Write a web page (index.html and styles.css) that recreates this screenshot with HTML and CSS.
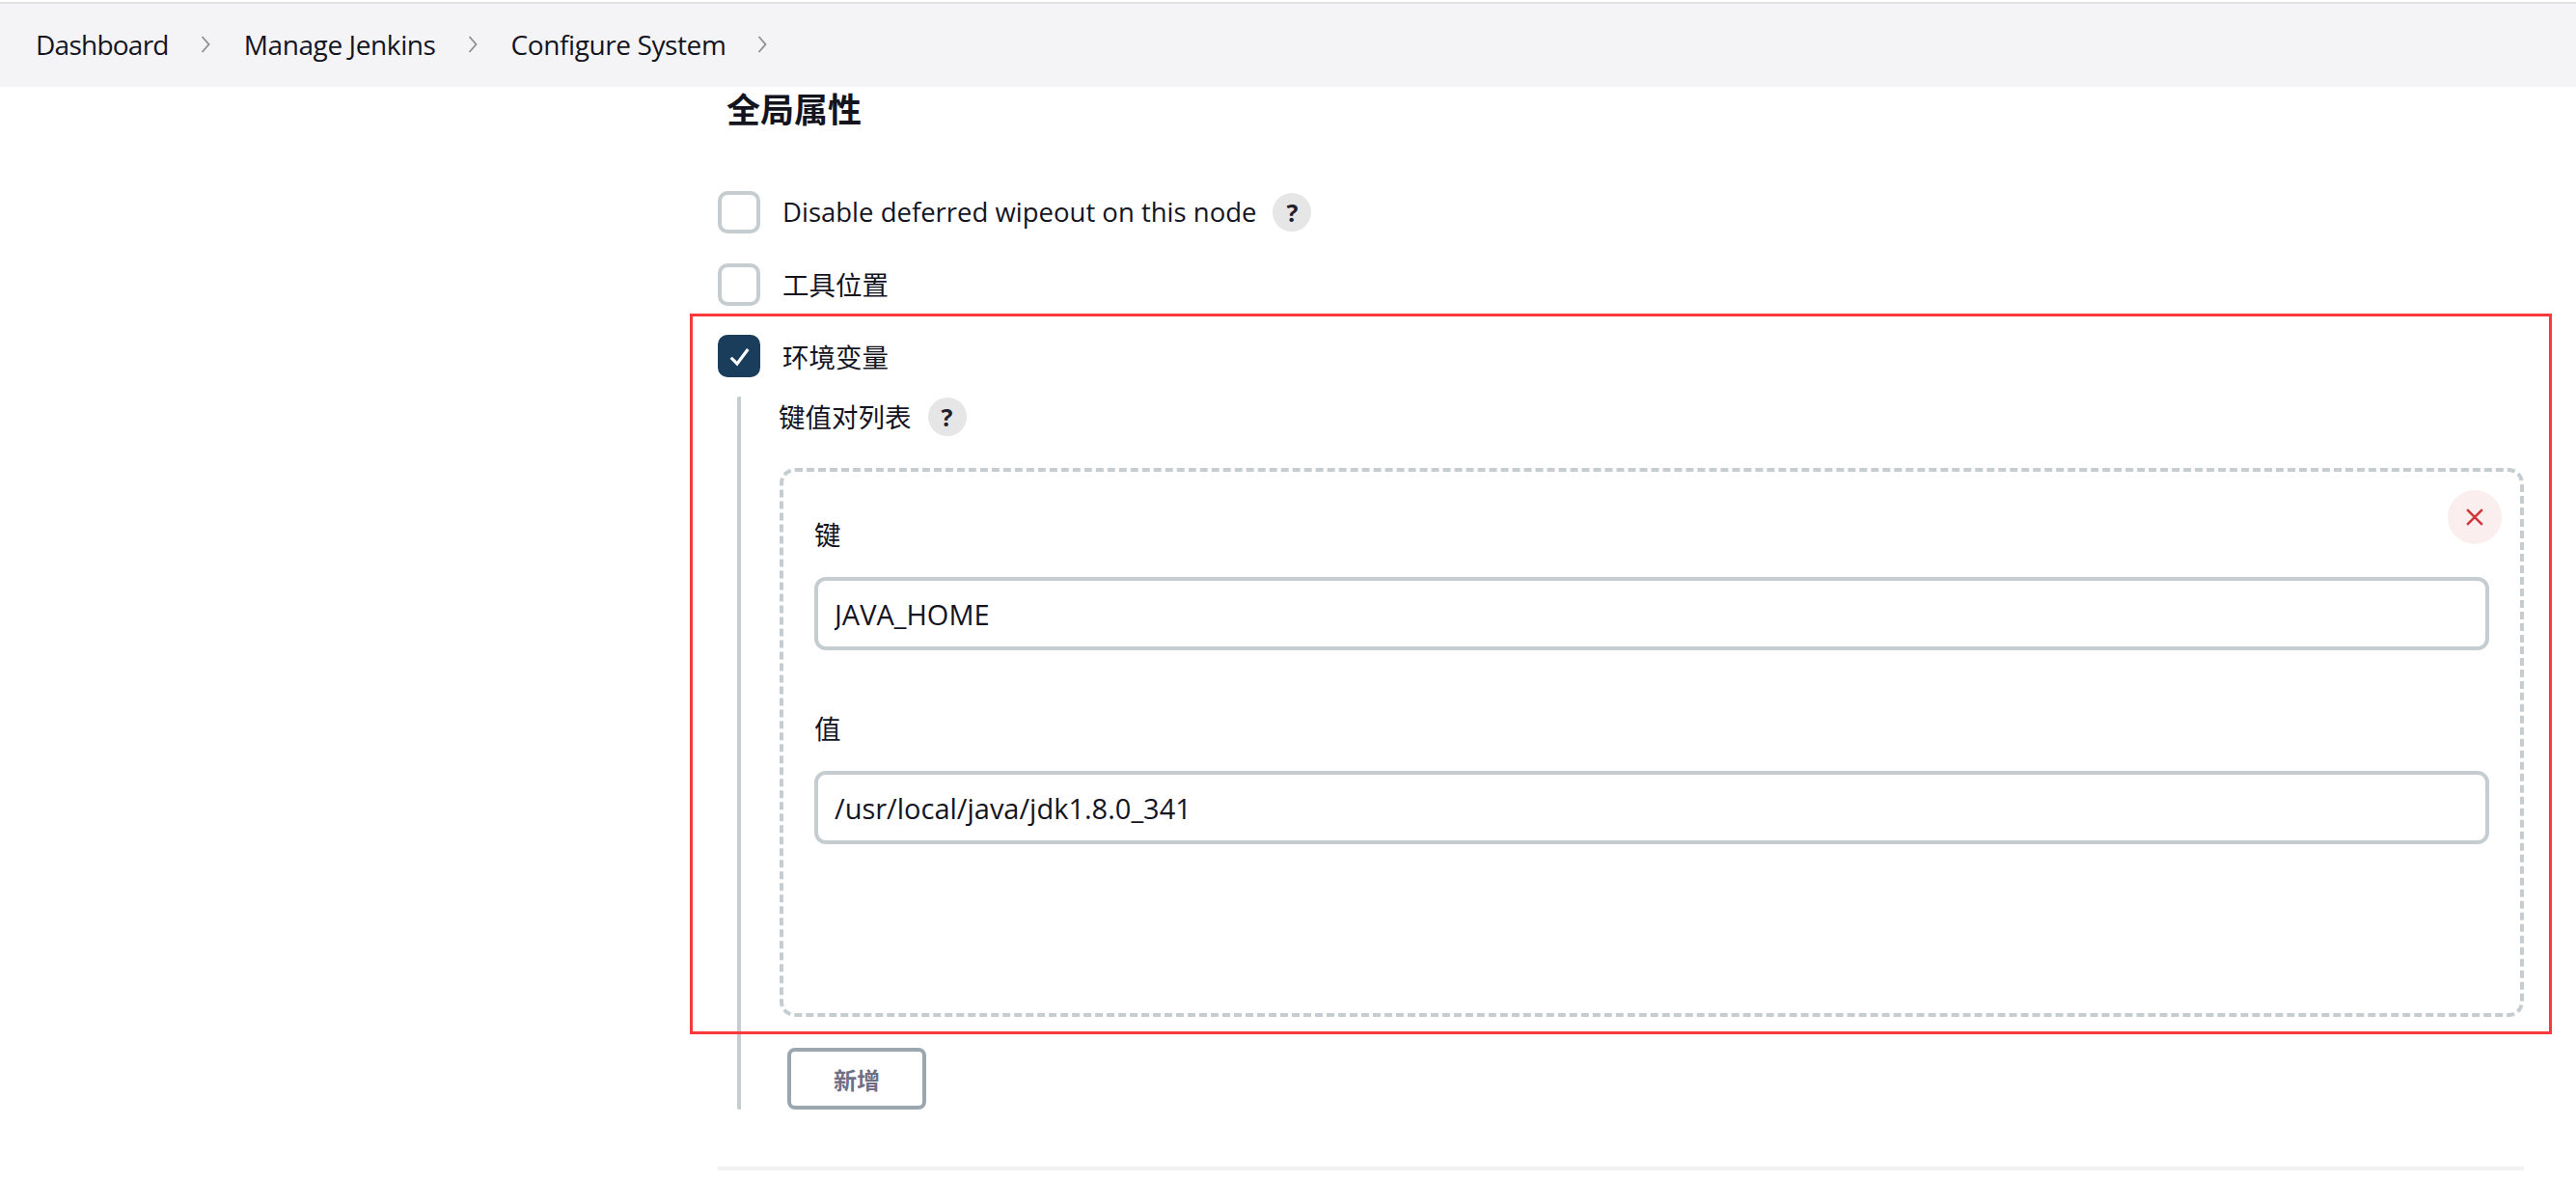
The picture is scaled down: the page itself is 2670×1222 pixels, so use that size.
FILE: index.html
```html
<!DOCTYPE html>
<html lang="zh">
<head>
<meta charset="utf-8">
<title>Configure System</title>
<link rel="stylesheet" href="styles.css">
</head>
<body>
<div class="page">
  <nav class="crumbs">
    <a class="crumb">Dashboard</a>
    <svg class="chev" viewBox="0 0 10 18"><path d="M1.5 1 L8.5 9 L1.5 17"/></svg>
    <a class="crumb">Manage Jenkins</a>
    <svg class="chev" viewBox="0 0 10 18"><path d="M1.5 1 L8.5 9 L1.5 17"/></svg>
    <a class="crumb">Configure System</a>
    <svg class="chev" viewBox="0 0 10 18"><path d="M1.5 1 L8.5 9 L1.5 17"/></svg>
  </nav>
  <main class="main">
    <h2 class="title">全局属性</h2>
    <div class="rows">
      <div class="row">
        <span class="box"></span>
        <span class="row-label">Disable deferred wipeout on this node</span>
        <span class="help">?</span>
      </div>
      <div class="row">
        <span class="box"></span>
        <span class="row-label row-label-cjk">工具位置</span>
      </div>
      <div class="row">
        <span class="box box-on">
          <svg class="tick" viewBox="0 0 20 20"><path d="M3 11 L8 16 L17 4"/></svg>
        </span>
        <span class="row-label row-label-cjk">环境变量</span>
      </div>
    </div>
    <section class="nested">
      <div class="list-head">
        <span class="list-label">键值对列表</span>
        <span class="help">?</span>
      </div>
      <div class="repeat">
        <button class="delete" type="button">
          <svg class="cross" viewBox="0 0 16 16"><path d="M1 1 L15 15 M15 1 L1 15"/></svg>
        </button>
        <div class="field-label">键</div>
        <input class="input" type="text" value="JAVA_HOME">
        <div class="field-label field-next">值</div>
        <input class="input" type="text" value="/usr/local/java/jdk1.8.0_341">
      </div>
      <button class="add" type="button">新增</button>
    </section>
    <div class="rule"></div>
  </main>
  <div class="highlight"></div>
</div>
</body>
</html>
```
FILE: styles.css
```css
* { box-sizing: border-box; }
html, body { margin: 0; padding: 0; background: #fff; }
body {
  font-family: "Open Sans", "Noto Sans CJK SC", sans-serif;
  color: #14141f;
  overflow: hidden;
}
.page { position: relative; width: 2670px; height: 1222px; overflow: hidden; padding-top: 2px; }
.crumbs {
  display: flex;
  align-items: center;
  height: 88px;
  padding: 0 0 3px 37px;
  background: #f4f4f6;
  border-top: 2px solid #e0e0e0;
  font-size: 28px;
}
.crumb { white-space: nowrap; letter-spacing: -0.4px; color: #14141f; }
.crumb:first-child { letter-spacing: -0.75px; }
.chev { width: 10px; height: 18px; margin: 0 35px 0 33px; fill: none; stroke: #8e8e8e; stroke-width: 1.8; }
.main { margin-left: 744px; width: 1872px; }
.title {
  margin: 0 0 0 9px;
  font-size: 35px;
  line-height: 48px;
  font-weight: 700;
  color: #14141f;
}
.rows { display: flex; flex-direction: column; gap: 30.5px; margin-top: 60px; }
.row { display: flex; align-items: center; height: 44px; }
.box {
  flex: none;
  display: flex;
  align-items: center;
  justify-content: center;
  width: 44px;
  height: 44px;
  border: 4px solid #c5cdd1;
  border-radius: 10px;
  background: #fff;
}
.box-on { background: #1a3d5c; border-color: #1a3d5c; }
.tick { width: 25px; height: 25px; fill: none; stroke: #fff; stroke-width: 2.5; }
.row-label { margin-left: 23px; font-size: 27.5px; line-height: 44px; }
.row-label-cjk { padding-top: 3px; }
.help {
  flex: none;
  display: flex;
  align-items: center;
  justify-content: center;
  width: 40px;
  height: 40px;
  margin-left: 17px;
  border-radius: 50%;
  background: #e6e6e6;
  font-size: 25px;
  font-weight: 700;
  line-height: 40px;
  color: #20202c;
}
.nested {
  margin: 20px 0 0 20px;
  padding-left: 40px;
  border-left: 4px solid #c5cdd1;
  border-radius: 2px;
}
.list-head { display: flex; align-items: center; height: 41px; padding-top: 1px; }
.list-label { font-size: 27.5px; line-height: 40px; padding-top: 2px; margin-left: -1px; }
.list-head .help { margin-left: 17px; }
.repeat {
  position: relative;
  margin-top: 33px;
  padding: 45px 32px 175px;
  border: 4px dashed #c5cdd1;
  border-radius: 16px;
}
.delete {
  position: absolute;
  top: 19px;
  right: 19px;
  display: flex;
  align-items: center;
  justify-content: center;
  width: 56px;
  height: 56px;
  padding: 0;
  border: 0;
  border-radius: 50%;
  background: #faeeef;
}
.cross { width: 18px; height: 18px; fill: none; stroke: #d33338; stroke-width: 2.2; }
.field-label { font-size: 27.5px; line-height: 40px; margin-bottom: 24px; padding-top: 1px; height: 40px; }
.field-next { margin-top: 61px; }
.input {
  display: block;
  width: 100%;
  height: 76px;
  padding: 0 17px;
  border: 4px solid #c5cdd1;
  border-radius: 12px;
  background: #fff;
  font: 29px "Open Sans", "Noto Sans CJK SC", sans-serif;
  color: #14141f;
  outline: none;
}
.add {
  display: block;
  width: 144px;
  height: 64px;
  margin: 32px 0 0 8px;
  padding: 0;
  border: 4px solid #9ba7af;
  border-radius: 8px;
  background: #fff;
  font: 700 24px "Noto Sans CJK SC", sans-serif;
  color: #6f7085;
}
.rule { height: 4px; margin-top: 59px; background: #f2f2f5; }
.highlight {
  position: absolute;
  left: 715px;
  top: 325px;
  width: 1930px;
  height: 747px;
  border: 3px solid #f93a3a;
  pointer-events: none;
}
```
